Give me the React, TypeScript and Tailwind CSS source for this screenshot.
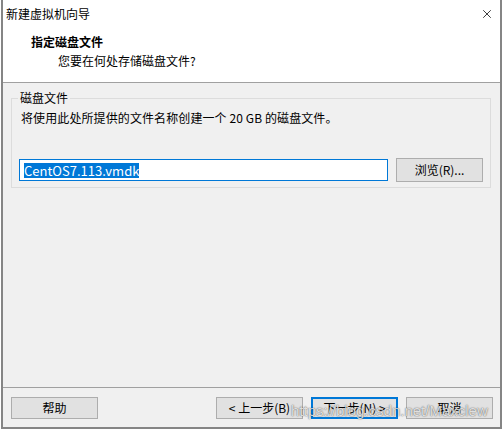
import { X } from 'lucide-react';

const cjk = '[font-family:"Noto_Sans_CJK_SC","Noto_Sans",sans-serif]';

function WinButton({ label, primary = false, className = '' }: { label: React.ReactNode; primary?: boolean; className?: string }) {
  return (
    <div
      className={`flex h-[22px] w-[87px] items-center justify-center bg-[#e1e1e1] text-[12px] leading-none text-black ${
        primary ? 'border-2 border-[#0078d7]' : 'border border-[#adadad]'
      } ${className}`}
    >
      {label}
    </div>
  );
}

export default function App() {
  return (
    <div className={`h-[430px] w-[503px] bg-white pl-px ${cjk}`}>
      <div className="relative flex h-[429px] w-[501px] flex-col border-x-2 border-b-2 border-[#858585]">
        {/* title + header */}
        <div className="bg-white">
          <div className="flex h-[26px] items-center justify-between pl-[3px] pr-[6px] pt-[1px] text-[12px] text-black">
            <span>新建虚拟机向导</span>
            <X className="h-[14px] w-[14px] text-black" strokeWidth={1.3} />
          </div>
          <div className="pb-[13px] pl-[28px] pt-[8px] text-[12px] leading-[16px] text-black">
            <p className="font-bold">指定磁盘文件</p>
            <p className="mt-[3px] pl-[27px]">您要在何处存储磁盘文件?</p>
          </div>
        </div>
        <div className="h-px bg-[#a0a0a0]" />

        {/* body */}
        <div className="flex flex-1 flex-col bg-[#f0f0f0]">
          <div className="relative ml-[8px] mt-[15px] h-[90px] w-[480px] border border-[#dcdcdc] pl-[7px]">
            <span className="absolute left-[6px] top-[-9px] bg-[#f0f0f0] px-[2px] text-[12px] leading-[16px] text-black">
              磁盘文件
            </span>
            <p className="ml-[2px] mt-[11px] text-[12px] leading-[16px] tracking-[0.1px] text-black">
              将使用此处所提供的文件名称创建一个 20 GB 的磁盘文件。
            </p>
            <div className="mt-[32px] flex items-center gap-[8px]">
              <div className="flex h-[22px] w-[369px] items-center border border-[#0078d7] bg-white pl-[4px]">
                <span className="bg-[#0078d7] text-[13px] leading-[15px] text-white">CentOS7.113.vmdk</span>
              </div>
              <WinButton label="浏览(R)..." className="h-[24px]" />
            </div>
          </div>
        </div>

        {/* footer */}
        <div className="h-px bg-[#a0a0a0]" />
        <div className="flex h-[39px] items-start bg-[#f0f0f0] pl-[8px] pt-[9px]">
          <WinButton label="帮助" />
          <div className="ml-auto mr-[7px] flex gap-[8px]">
            <WinButton label="< 上一步(B)" />
            <WinButton label="下一步(N) >" primary />
            <WinButton label="取消" />
          </div>
        </div>

        {/* watermark overlaid on the screenshot */}
        <span className="pointer-events-none absolute left-[288px] top-[400px] [font-family:'Liberation_Sans',sans-serif] text-[15px] text-white/80 [text-shadow:0_0_1px_rgba(0,0,0,0.6),0_0_2px_rgba(0,0,0,0.3)]">
          https://blog.csdn.net/Maxclew
        </span>
      </div>
    </div>
  );
}
